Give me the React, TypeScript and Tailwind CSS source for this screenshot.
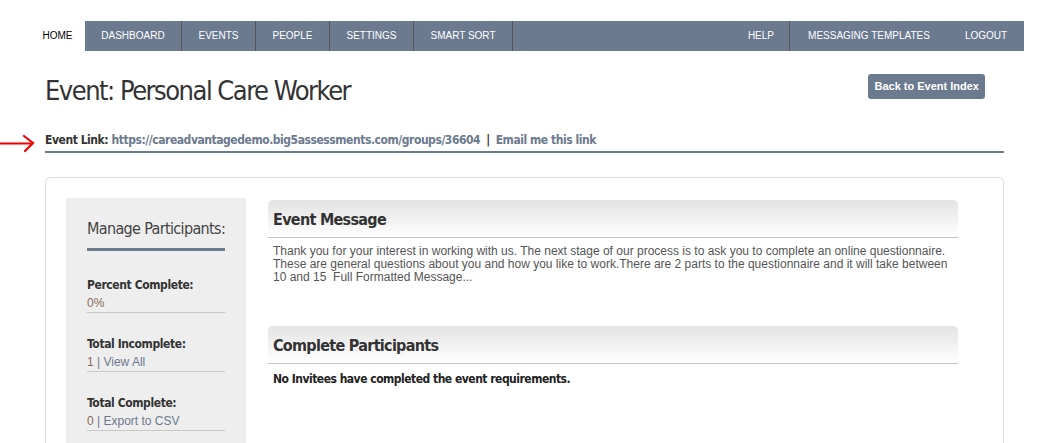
const narrow = 'font-["DejaVu_Sans_Condensed","DejaVu_Sans",sans-serif] [font-stretch:condensed]';

const leftNav = ['DASHBOARD', 'EVENTS', 'PEOPLE', 'SETTINGS', 'SMART SORT'];

function RedArrow() {
  return (
    <svg width="40" height="22" viewBox="0 0 40 22" className="absolute left-0 top-[132px]">
      <path d="M0 11.5 L31 11.5" stroke="#f00000" strokeWidth="2" fill="none" />
      <path d="M24 4 L33 11 L25 19" stroke="#f00000" strokeWidth="2.2" fill="none" strokeLinecap="round" />
    </svg>
  );
}

function StatBlock({ label, first, children }: { label: string; first?: boolean; children: React.ReactNode }) {
  return (
    <div className={first ? 'mt-[25px]' : 'mt-[22px]'}>
      <div className={`${narrow} text-[12px] font-bold tracking-[-0.4px] text-[#333] leading-[18px]`}>{label}</div>
      <div className="mt-[2px] text-[12px] text-[#6b7a8f] leading-[15px] pb-[1px] border-b border-[#c8c8c8]">
        {children}
      </div>
    </div>
  );
}

function SectionHeader({ title }: { title: string }) {
  return (
    <div className="h-[38px] rounded-t-[5px] bg-gradient-to-b from-[#e3e3e3] to-white border-b border-[#c4c4c4] flex items-center px-[5px]">
      <h2 className={`${narrow} text-[16px] font-bold tracking-[-0.7px] text-[#333] pt-[2px]`}>{title}</h2>
    </div>
  );
}

export default function App() {
  return (
    <div className="relative w-[1038px] h-[443px] overflow-hidden bg-white font-['Liberation_Sans',Arial,sans-serif]">
      <RedArrow />

      {/* Top navigation */}
      <div className="pt-[21px] pl-[30px] pr-[14px]">
        <nav className="flex h-[30px] text-[10px] leading-none">
          <a className="w-[55px] flex items-center justify-center bg-white text-black">HOME</a>
          <div className="flex-1 flex bg-[#6b7a8f] text-white">
            {leftNav.map(item => (
              <a
                key={item}
                className={`flex items-center justify-center border-r border-[#555] ${
                  item === 'DASHBOARD'
                    ? 'w-[97px]'
                    : item === 'SMART SORT'
                    ? 'w-[99px]'
                    : item === 'SETTINGS'
                    ? 'w-[84px]'
                    : 'w-[74px]'
                }`}
              >
                {item}
              </a>
            ))}
            <div className="flex-1" />
            <a className="flex items-center justify-end pr-[15px] w-[60px] border-r border-[#555]">HELP</a>
            <a className="flex items-center justify-center w-[158px]">MESSAGING TEMPLATES</a>
            <a className="flex items-center justify-center w-[76px]">LOGOUT</a>
          </div>
        </nav>
      </div>

      {/* Page header */}
      <div className="pl-[45px] pr-[34px]">
        <div className="flex justify-between items-start mt-[22px]">
          <h1 className={`${narrow} text-[27px] font-light tracking-[-1.5px] text-[#333] leading-[34px] mt-[1px]`}>
            Event: Personal Care Worker
          </h1>
          <button className="mt-[1px] mr-[19px] h-[25px] px-[6px] rounded-[3px] bg-[#6b7a8f] text-white text-[11px] font-bold">
            Back to Event Index
          </button>
        </div>

        <div className={`${narrow} mt-[24px] text-[12px] font-bold tracking-[-0.45px] leading-[16px] pb-[3px] border-b-2 border-[#6b7a8f]`}>
          <span className="text-[#333]">Event Link: </span>
          <span className="text-[#6b7a8f]">https://careadvantagedemo.big5assessments.com/groups/36604</span>
          <span className="text-[#333] mx-[6px]">|</span>
          <span className="text-[#6b7a8f]">Email me this link</span>
        </div>

        {/* Content box */}
        <div className="mt-[24px] border border-[#dcdcdc] rounded-[5px] p-[20px] flex gap-[22px] h-[300px]">
          <aside className="w-[180px] bg-[#eeeeee] px-[21px] pt-[20px] shrink-0">
            <h3 className={`${narrow} text-[16px] font-light tracking-[-0.65px] text-[#444] leading-[22px] pb-[8px] border-b-[3px] border-[#6b7a8f] whitespace-nowrap`}>
              Manage Participants:
            </h3>
            <StatBlock label="Percent Complete:" first>
              <span className="text-[#8b6a57]">0%</span>
            </StatBlock>
            <StatBlock label="Total Incomplete:">
              <span className="text-[#8b6a57]">1</span> | View All
            </StatBlock>
            <StatBlock label="Total Complete:">
              <span className="text-[#8b6a57]">0</span> | Export to CSV
            </StatBlock>
          </aside>

          <main className="w-[690px] mt-[2px]">
            <SectionHeader title="Event Message" />
            <p className="px-[5px] pt-[7px] text-[12px] leading-[13px] text-[#555]">
              Thank you for your interest in working with us. The next stage of our process is to ask you to complete an online questionnaire.
              These are general questions about you and how you like to work.There are 2 parts to the questionnaire and it will take between
              10 and 15 &nbsp;Full Formatted Message...
            </p>

            <div className="mt-[42px]">
              <SectionHeader title="Complete Participants" />
              <p className={`${narrow} px-[5px] pt-[6px] text-[12px] font-bold tracking-[-0.5px] text-[#222]`}>
                No Invitees have completed the event requirements.
              </p>
            </div>
          </main>
        </div>
      </div>
    </div>
  );
}
